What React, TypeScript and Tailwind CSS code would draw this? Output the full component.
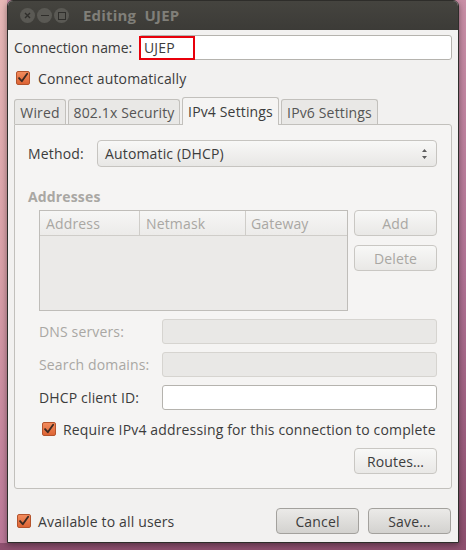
import React from "react";

const font = { fontFamily: '"Open Sans", "DejaVu Sans", sans-serif' };

function Check({ className = "" }: { className?: string }) {
  return (
    <span className={"inline-flex h-[14px] w-[14px] shrink-0 items-center justify-center rounded-[2px] border border-[#b4532c] bg-gradient-to-b from-[#f28b5c] to-[#dd6434] " + className}>
      <svg width="12" height="12" viewBox="0 0 13 13">
        <path d="M2.2 6.6 L5.2 10 L11 1.8" fill="none" stroke="#3d2a22" strokeWidth="2" strokeLinecap="round" strokeLinejoin="round" />
      </svg>
    </span>
  );
}

function Btn({ children, w, disabled, dark }: { children: React.ReactNode; w: string; disabled?: boolean; dark?: boolean }) {
  const base = dark
    ? "border-[#a3a19d] bg-gradient-to-b from-[#ebeae8] to-[#d3d2cf]"
    : "border-[#c9c7c3] bg-gradient-to-b from-[#f8f8f7] to-[#e9e8e6]";
  return (
    <div className={`flex h-[26px] items-center justify-center rounded-[4px] border ${base} ${w} ${disabled ? "text-[#a9a7a3]" : "text-[#3c3c3c]"}`}>
      {children}
    </div>
  );
}

function Field({ disabled, className = "" }: { disabled?: boolean; className?: string }) {
  return (
    <div className={`h-[25px] rounded-[3px] border ${disabled ? "border-[#d6d4d0] bg-[#e9e8e6]" : "border-[#b5b3ae] bg-white"} ${className}`} />
  );
}

export default function App() {
  return (
    <div
      className="h-[550px] w-[466px] overflow-hidden bg-gradient-to-b from-[#c98fa6] via-[#b07294] to-[#8d4f6e] text-[14px] leading-[19px] tracking-[0.15px] text-[#3c3c3c]"
      style={font}
    >
      <div className="flex">
        <div className="h-[543px] w-[7px] bg-gradient-to-b from-[#e7b7b6] via-[#d9a0a8] to-[#bb7898]" />
        <div className="flex h-[543px] w-[452px] flex-col overflow-hidden rounded-tl-[6px] rounded-tr-[6px] border border-[#2e2d2a] bg-[#f2f1f0] shadow-[0_2px_6px_rgba(0,0,0,0.4)]">
          {/* title bar */}
          <div className="flex h-[29px] shrink-0 items-center bg-gradient-to-b from-[#45443f] to-[#3c3b37] pl-[12px]">
            <div className="flex gap-[2px]">
              <span className="flex h-[15px] w-[15px] items-center justify-center rounded-full bg-[#5a5954]">
                <svg width="7" height="7" viewBox="0 0 7 7"><path d="M1 1 L6 6 M6 1 L1 6" stroke="#2f2e2b" strokeWidth="1.4" /></svg>
              </span>
              <span className="flex h-[15px] w-[15px] items-center justify-center rounded-full bg-[#5a5954]">
                <span className="h-[1.5px] w-[8px] bg-[#2f2e2b]" />
              </span>
              <span className="flex h-[15px] w-[15px] items-center justify-center rounded-full bg-[#5a5954]">
                <span className="h-[8px] w-[8px] border-[1.4px] border-[#2f2e2b]" />
              </span>
            </div>
            <span className="ml-[14px] text-[15px] font-bold tracking-[0.2px] text-[#807f79]">Editing&nbsp; UJEP</span>
          </div>

          <div className="flex flex-1 flex-col px-[6px]">
            {/* connection name */}
            <div className="mt-[5px] flex h-[25px] items-center">
              <span className="w-[125px] whitespace-nowrap tracking-[-0.05px]">Connection name:</span>
              <div className="relative flex h-[25px] flex-1 items-center rounded-[3px] border border-[#b5b3ae] bg-white pl-[4px]">
                UJEP
                <span className="absolute left-[-1px] top-0 h-[24px] w-[56px] border-2 border-[#e8000b]" />
              </div>
            </div>

            <div className="mt-[10px] flex h-[16px] items-center gap-[8px] pl-[2px]">
              <Check />
              <span>Connect automatically</span>
            </div>

            {/* tabs */}
            <div className="mt-[10px] flex h-[28px] items-end gap-[2px]">
              <div className="flex h-[25px] w-[52px] items-center justify-center rounded-t-[3px] border border-b-0 border-[#c2c0bc] bg-[#e9e8e6] text-[#555]">Wired</div>
              <div className="flex h-[25px] w-[112px] items-center justify-center rounded-t-[3px] border border-b-0 border-[#c2c0bc] bg-[#e9e8e6] text-[#555]">802.1x Security</div>
              <div className="relative z-10 mb-[-1px] flex h-[28px] w-[97px] items-center justify-center rounded-t-[3px] border border-b-0 border-[#c2c0bc] bg-[#f5f4f3]">IPv4 Settings</div>
              <div className="flex h-[25px] w-[97px] items-center justify-center rounded-t-[3px] border border-b-0 border-[#c2c0bc] bg-[#e9e8e6] text-[#555]">IPv6 Settings</div>
            </div>

            {/* panel */}
            <div className="flex h-[365px] flex-col rounded-b-[3px] rounded-tr-[3px] border border-[#c2c0bc] bg-[#f5f4f3] pl-[13px] pr-[14px]">
              <div className="mt-[15px] flex h-[27px] items-center">
                <span className="w-[69px]">Method:</span>
                <div className="flex h-[27px] flex-1 items-center justify-between rounded-[4px] border border-[#c6c4c0] bg-gradient-to-b from-[#f8f8f7] to-[#e8e7e5] pl-[7px] pr-[8px]">
                  <span>Automatic (DHCP)</span>
                  <svg width="7" height="12" viewBox="0 0 7 12"><path d="M3.5 1 L6 4 L1 4 Z M1 8 L6 8 L3.5 11 Z" fill="#5c5c5c" /></svg>
                </div>
              </div>

              <div className="mt-[20px] font-bold text-[#a9a7a3]">Addresses</div>

              <div className="mt-[4px] flex pl-[11px]">
                <div className="flex h-[101px] w-[310px] flex-col border border-[#bfbdb9] bg-[#ebeae8]">
                  <div className="flex h-[25px] border-b border-[#cfcdc9] bg-gradient-to-b from-[#f6f6f5] to-[#ecebe9] text-[#a9a7a3]">
                    <span className="flex w-[100px] items-center border-r border-[#cfcdc9] pl-[6px]">Address</span>
                    <span className="flex w-[106px] items-center border-r border-[#cfcdc9] pl-[6px]">Netmask</span>
                    <span className="flex flex-1 items-center pl-[5px]">Gateway</span>
                  </div>
                </div>
                <div className="ml-[6px] flex flex-col gap-[9px]">
                  <Btn w="w-[83px]" disabled>Add</Btn>
                  <Btn w="w-[83px]" disabled>Delete</Btn>
                </div>
              </div>

              <div className="mt-[8px] flex flex-col gap-[8px] pl-[11px]">
                <div className="flex h-[25px] items-center">
                  <span className="w-[123px] text-[#a9a7a3]">DNS servers:</span>
                  <Field disabled className="flex-1" />
                </div>
                <div className="flex h-[25px] items-center">
                  <span className="w-[123px] text-[#a9a7a3]">Search domains:</span>
                  <Field disabled className="flex-1" />
                </div>
                <div className="flex h-[25px] items-center">
                  <span className="w-[123px]">DHCP client ID:</span>
                  <Field className="flex-1" />
                </div>
              </div>

              <div className="mt-[11px] flex h-[16px] items-center gap-[7px] pl-[14px]">
                <Check />
                <span className="whitespace-nowrap">Require IPv4 addressing for this connection to complete</span>
              </div>

              <div className="mt-[11px] flex justify-end">
                <Btn w="w-[83px]">Routes…</Btn>
              </div>
            </div>

            {/* bottom row */}
            <div className="mt-[19px] flex items-center">
              <div className="flex items-center gap-[7px] pl-[3px]">
                <Check />
                <span>Available to all users</span>
              </div>
              <div className="ml-auto flex gap-[9px] pr-[1px]">
                <Btn w="w-[83px]" dark>Cancel</Btn>
                <Btn w="w-[83px]" dark>Save...</Btn>
              </div>
            </div>
          </div>
        </div>
      </div>
    </div>
  );
}
